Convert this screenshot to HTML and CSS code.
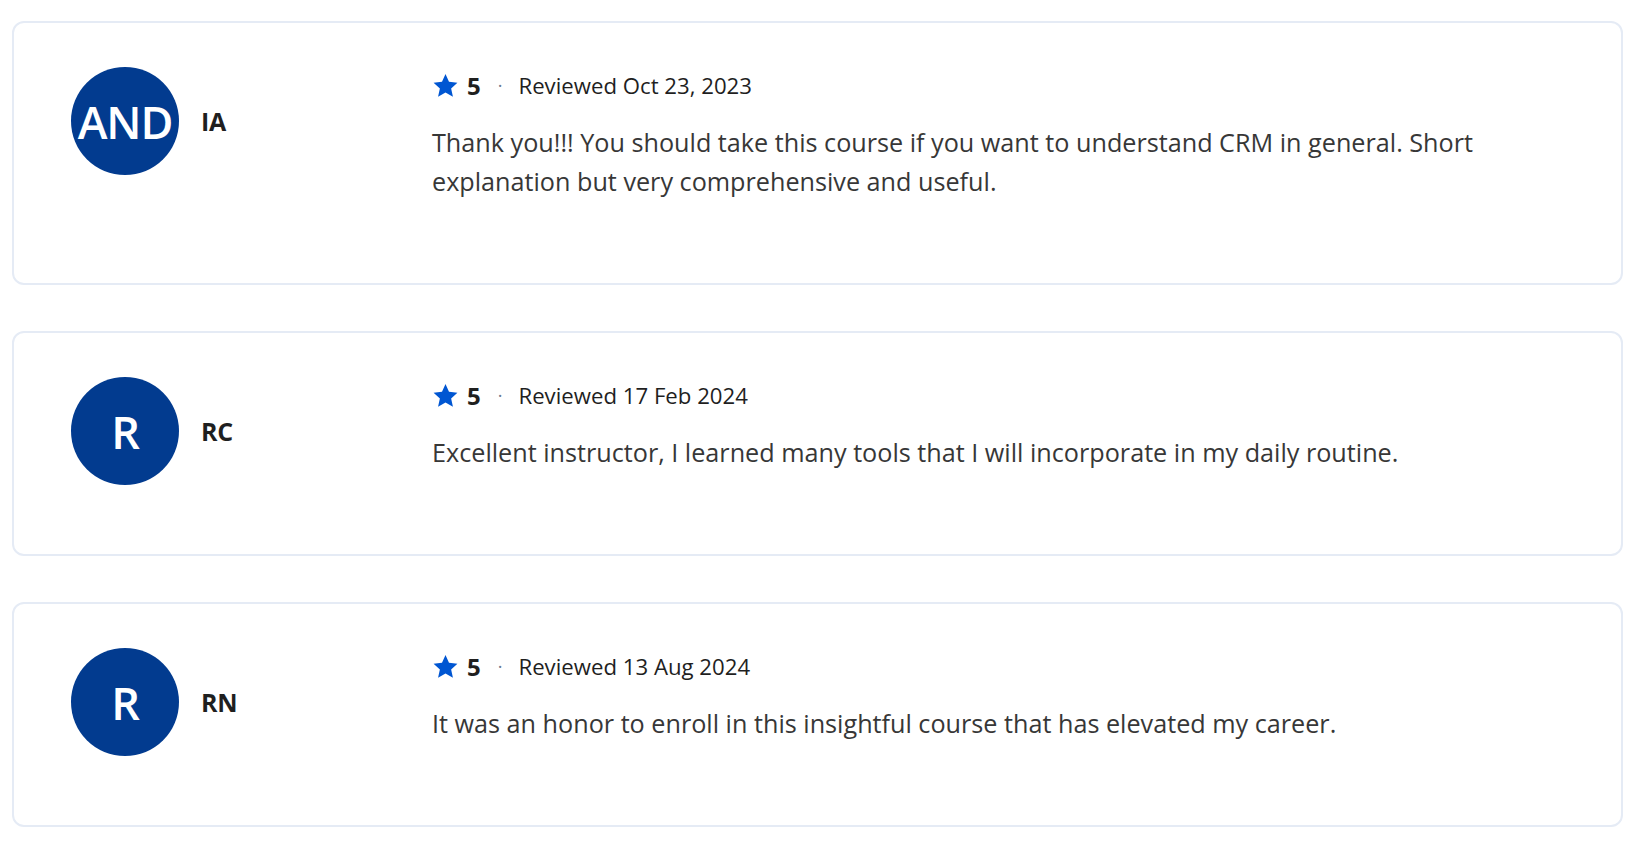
FILE: index.html
```html
<!DOCTYPE html>
<html>
<head>
<meta charset="utf-8">
<link rel="stylesheet" href="styles.css">
</head>
<body>
<div class="list">
  <div class="card">
    <div class="author">
      <div class="avatar">AND</div>
      <div class="name">IA</div>
    </div>
    <div class="review">
      <div class="meta">
        <svg class="star" viewBox="0 0 24 24"><path d="M12 1.8l3.1 6.9 7.5.8-5.6 5.1 1.6 7.4L12 18.2l-6.6 3.8 1.6-7.4-5.6-5.1 7.5-.8z"/></svg>
        <span class="score">5</span>
        <span class="dot">·</span>
        <span class="date">Reviewed Oct 23, 2023</span>
      </div>
      <p class="text">Thank you!!! You should take this course if you want to understand CRM in general. Short explanation but very comprehensive and useful.</p>
    </div>
  </div>
  <div class="card">
    <div class="author">
      <div class="avatar">R</div>
      <div class="name">RC</div>
    </div>
    <div class="review">
      <div class="meta">
        <svg class="star" viewBox="0 0 24 24"><path d="M12 1.8l3.1 6.9 7.5.8-5.6 5.1 1.6 7.4L12 18.2l-6.6 3.8 1.6-7.4-5.6-5.1 7.5-.8z"/></svg>
        <span class="score">5</span>
        <span class="dot">·</span>
        <span class="date">Reviewed 17 Feb 2024</span>
      </div>
      <p class="text">Excellent instructor, I learned many tools that I will incorporate in my daily routine.</p>
    </div>
  </div>
  <div class="card">
    <div class="author">
      <div class="avatar">R</div>
      <div class="name">RN</div>
    </div>
    <div class="review">
      <div class="meta">
        <svg class="star" viewBox="0 0 24 24"><path d="M12 1.8l3.1 6.9 7.5.8-5.6 5.1 1.6 7.4L12 18.2l-6.6 3.8 1.6-7.4-5.6-5.1 7.5-.8z"/></svg>
        <span class="score">5</span>
        <span class="dot">·</span>
        <span class="date">Reviewed 13 Aug 2024</span>
      </div>
      <p class="text">It was an honor to enroll in this insightful course that has elevated my career.</p>
    </div>
  </div>
</div>
</body>
</html>
```

FILE: styles.css
```css
* { box-sizing: border-box; }
html, body { margin: 0; padding: 0; background: #fff; }
body { font-family: "Open Sans", "Noto Sans", sans-serif; color: #1f1f1f; }
.list {
  display: flex;
  flex-direction: column;
  gap: 46px;
  padding: 21px 17px 0 12px;
}
.card {
  display: flex;
  border: 2px solid #e5ebf5;
  border-radius: 12px;
  padding: 44px 40px 0 57px;
}
.author {
  width: 361px;
  flex: none;
  display: flex;
  align-items: center;
  gap: 22px;
  align-self: flex-start;
}
.avatar {
  width: 108px;
  height: 108px;
  border-radius: 50%;
  background: #023b8f;
  color: #fff;
  display: flex;
  align-items: center;
  justify-content: center;
  font-size: 45px;
  font-weight: 600;
  letter-spacing: -1.2px;
}
.name {
  font-size: 25px;
  font-weight: 700;
  color: #1f1f1f;
  letter-spacing: -0.3px;
}
.review { flex: 1; padding: 6px 0 82px; }
.meta {
  display: flex;
  align-items: center;
  height: 24px;
  font-size: 22.2px;
}
.star { width: 27px; height: 27px; fill: #0056d2; margin-right: 8px; flex: none; }
.score { font-weight: 700; font-size: 24px; }
.dot { color: #6b7a90; margin: 0 16px 0 17px; font-size: 18px; }
.date { color: #1f1f1f; }
.text {
  margin: 26px 0 0;
  font-size: 25.2px;
  line-height: 39px;
  color: #373737;
}
```
